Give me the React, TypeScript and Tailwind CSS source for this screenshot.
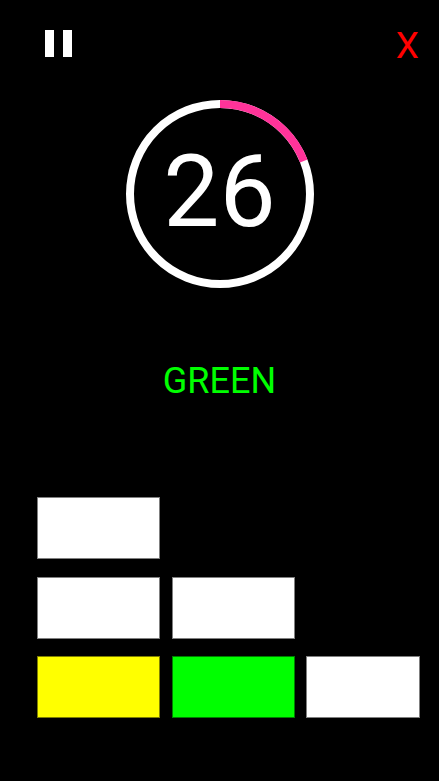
import React from "react";

const RADIUS = 90;
const CIRC = 2 * Math.PI * RADIUS;

function TimerRing({ seconds, progress }: { seconds: number; progress: number }) {
  return (
    <div className="relative w-[188px] h-[188px] mx-auto">
      <svg width="188" height="188" viewBox="0 0 188 188">
        <circle cx="94" cy="94" r={RADIUS} fill="none" stroke="#ffffff" strokeWidth="8" />
        <circle
          cx="94"
          cy="94"
          r={RADIUS}
          fill="none"
          stroke="#ff3399"
          strokeWidth="8"
          strokeDasharray={`${CIRC * progress} ${CIRC}`}
          transform="rotate(-90 94 94)"
        />
      </svg>
      <div className="absolute inset-0 flex items-center justify-center">
        <span className="text-[100px] leading-none text-white -mt-[5px]">{seconds}</span>
      </div>
    </div>
  );
}

function Block({ color, wide = true }: { color: string; wide?: boolean }) {
  return <div className={`h-[62px] border border-black/50 ${wide ? "w-[123px]" : "w-[114px]"} ${color}`} />;
}

export default function App() {
  return (
    <div className="w-[439px] h-[781px] bg-black overflow-hidden font-['Roboto',sans-serif]">
      <div className="flex justify-between items-start pl-[45px] pr-[20px] pt-[27px]">
        <div className="flex gap-[9px] mt-[3px]">
          <div className="w-[9px] h-[27px] bg-white" />
          <div className="w-[9px] h-[27px] bg-white" />
        </div>
        <span className="text-[37px] leading-none text-[#ff0000]">X</span>
      </div>

      <div className="mt-[36px]">
        <TimerRing seconds={26} progress={0.19} />
      </div>

      <div className="mt-[75px] text-center text-[36px] leading-none text-[#00ff00]">GREEN</div>

      <div className="mt-[98px] pl-[37px] flex flex-col gap-[17.5px]">
        <div className="flex gap-[11.5px]">
          <Block color="bg-white" />
        </div>
        <div className="flex gap-[11.5px]">
          <Block color="bg-white" />
          <Block color="bg-white" />
        </div>
        <div className="flex gap-[11.5px]">
          <Block color="bg-[#ffff00]" />
          <Block color="bg-[#00ff00]" />
          <Block color="bg-white" wide={false} />
        </div>
      </div>
    </div>
  );
}
